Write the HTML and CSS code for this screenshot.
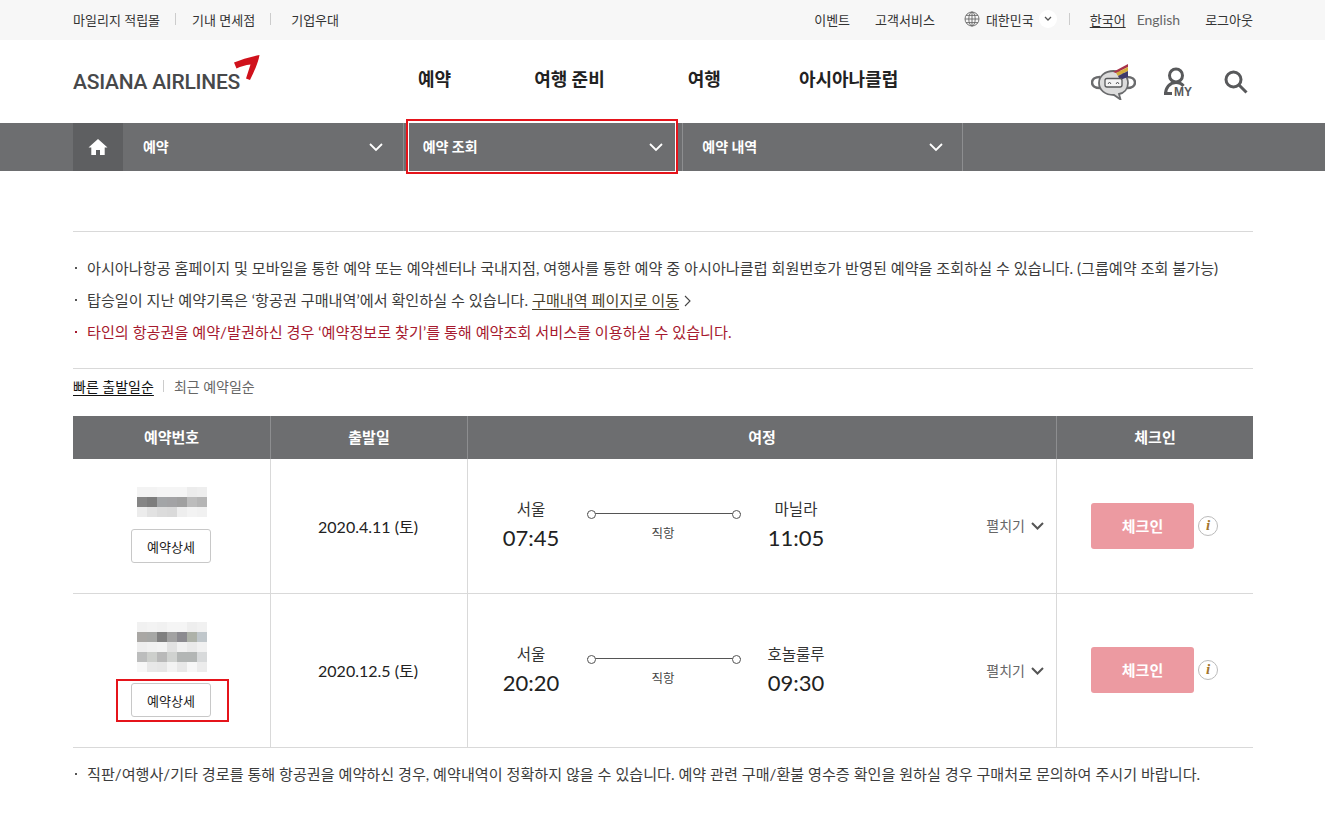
FILE: index.html
```html
<!DOCTYPE html>
<html lang="ko">
<head>
    <meta charset="UTF-8">
    <title>예약 조회 | 아시아나항공</title>
    <link rel="stylesheet" href="styles.css">
</head>
<body>
    <div class="top-bar">
        <div class="wrap top-inner">
            <ul class="top-links">
                <li>마일리지 적립몰</li>
                <li>기내 면세점</li>
                <li>기업우대</li>
            </ul>
            <div class="top-right">
                <span class="top-item">이벤트</span>
                <span class="top-item">고객서비스</span>
                <span class="country">
                    <svg class="globe" width="16" height="16" viewBox="0 0 16 16" fill="none" stroke="#666" stroke-width="0.9">
                        <circle cx="8" cy="8" r="7"/>
                        <ellipse cx="8" cy="8" rx="3.2" ry="7"/>
                        <path d="M8 1v14M1 8h14M2 4.4h12M2 11.6h12"/>
                    </svg>
                    대한민국
                    <span class="country-toggle">
                        <svg width="8" height="6" viewBox="0 0 8 6" fill="none" stroke="#555" stroke-width="1.3"><path d="M1 1l3 3 3-3"/></svg>
                    </span>
                </span>
                <span class="lang lang-on">한국어</span>
                <span class="lang lang-en">English</span>
                <span class="logout">로그아웃</span>
            </div>
        </div>
    </div>

    <header class="wrap header">
        <div class="logo">
            <span class="logo-text">ASIANA AIRLINES</span>
            <svg class="logo-mark" width="28" height="28" viewBox="0 0 28 28">
                <path d="M1 8.500C8 5.500 18 2.500 26.500 1 25.500 8 21 18 17 26L13 24.500C14.500 20 16 15 17.500 10.500 12.500 11 8 12.500 3.500 14.500Z" fill="#d0111b"/>
            </svg>
        </div>
        <nav class="main-nav">
            <a class="nav-resv">예약</a>
            <a class="nav-prep">여행 준비</a>
            <a class="nav-trip">여행</a>
            <a class="nav-club">아시아나클럽</a>
        </nav>
        <div class="header-icons">
            <svg class="bot-icon" width="45" height="36" viewBox="0 0 45 36">
                <path d="M9 13C4 13 1 15.500 1 18.500S4 24 9 24" fill="none" stroke="#6a6b6d" stroke-width="2.500"/>
                <path d="M36 13c5 0 8 2.500 8 5.500S41 24 36 24" fill="none" stroke="#6a6b6d" stroke-width="2.500"/>
                <path d="M22.500 7C31 7 37 12 37 19c0 6-4 10-9 11l1.500 5.500L23 31C14 31 8 26 8 19S14 7 22.500 7z" fill="#dcdcdc" stroke="#6a6b6d" stroke-width="1.800"/>
                <path d="M22 8L37 0v3L25 9z" fill="#a8324a"/>
                <path d="M25 9L37 3v4L27 12z" fill="#d3ad3c"/>
                <path d="M27 12L37 7v6l-8 3z" fill="#3d3a6b"/>
                <rect x="14" y="14.500" width="17" height="8.500" rx="2" fill="#f4f4f4" stroke="#58595b" stroke-width="1.300"/>
                <path d="M17 20l1.500-2 1.500 2M25 20l1.500-2 1.500 2" fill="none" stroke="#58595b"/>
            </svg>
            <span class="my-icon">
                <svg width="30" height="30" viewBox="0 0 30 30" fill="none" stroke="#58595b" stroke-width="3">
                    <circle cx="14" cy="8.500" r="6.500"/>
                    <path d="M3.500 27c0-6 4-11.500 10.500-11.500 3.500 0 6 1.500 7.500 3.500"/>
                    <path d="M2 26.500h8"/>
                </svg>
                <span class="my-label">MY</span>
            </span>
            <svg width="26" height="26" viewBox="0 0 26 26" fill="none" stroke="#58595b" stroke-width="3">
                <circle cx="10.500" cy="10.500" r="7.500"/>
                <path d="M16 16l7.500 7.500"/>
            </svg>
        </div>
    </header>

    <div class="sub-nav">
        <div class="wrap sub-inner">
            <div class="home">
                <svg width="20" height="18" viewBox="0 0 20 18" fill="#fff"><path d="M10 1L0.500 9.500h2.800V17h4.700v-5h4v5h4.700V9.500h2.800z"/></svg>
            </div>
            <div class="sub-item sub-first">예약<svg class="chev" width="14" height="9" viewBox="0 0 14 9" fill="none" stroke="#fff" stroke-width="1.800"><path d="M1 1l6 6 6-6"/></svg></div>
            <div class="sub-item sub-second">예약 조회<svg class="chev" width="14" height="9" viewBox="0 0 14 9" fill="none" stroke="#fff" stroke-width="1.800"><path d="M1 1l6 6 6-6"/></svg><span class="mark mark-nav"></span></div>
            <div class="sub-item sub-third">예약 내역<svg class="chev" width="14" height="9" viewBox="0 0 14 9" fill="none" stroke="#fff" stroke-width="1.800"><path d="M1 1l6 6 6-6"/></svg></div>
        </div>
    </div>

    <main class="wrap content">
        <ul class="notes">
            <li>아시아나항공 홈페이지 및 모바일을 통한 예약 또는 예약센터나 국내지점, 여행사를 통한 예약 중 아시아나클럽 회원번호가 반영된 예약을 조회하실 수 있습니다. (그룹예약 조회 불가능)</li>
            <li>탑승일이 지난 예약기록은 ‘항공권 구매내역’에서 확인하실 수 있습니다. <a class="note-link">구매내역 페이지로 이동</a><svg class="note-arrow" width="7" height="12" viewBox="0 0 7 12" fill="none" stroke="#444" stroke-width="1.100"><path d="M1 1l5 5-5 5"/></svg></li>
            <li class="note-red">타인의 항공권을 예약/발권하신 경우 ‘예약정보로 찾기’를 통해 예약조회 서비스를 이용하실 수 있습니다.</li>
        </ul>

        <div class="sort-tabs">
            <a class="sort-on">빠른 출발일순</a>
            <a class="sort-off">최근 예약일순</a>
        </div>

        <div class="resv-table">
            <div class="th">예약번호</div>
            <div class="th">출발일</div>
            <div class="th">여정</div>
            <div class="th">체크인</div>

            <div class="td row-one col-no">
                <div class="pixels">
                    <i style="background:#f3f3f3"></i><i style="background:#f3f3f3"></i><i style="background:#f5f5f5"></i><i style="background:#f5f5f5"></i><i style="background:#f5f5f5"></i><i style="background:#ececec"></i><i style="background:#eeeeee"></i>
                    <i style="background:#858585"></i><i style="background:#7d7d7d"></i><i style="background:#a3a5a7"></i><i style="background:#a3a3a5"></i><i style="background:#a0a0a0"></i><i style="background:#bcbcbc"></i><i style="background:#b5b5b5"></i>
                    <i style="background:#ececec"></i><i style="background:#e2e2e2"></i><i style="background:#dcdcdc"></i><i style="background:#dadada"></i><i style="background:#eeeeee"></i><i style="background:#f3f3f3"></i><i style="background:#f1f1f1"></i>
                </div>
                <button class="detail-btn">예약상세</button>
            </div>
            <div class="td row-one date">2020.4.11 (토)</div>
            <div class="td row-one route">
                <div class="city"><span class="city-name">서울</span><span class="time">07:45</span></div>
                <div class="line"><span class="line-bar"></span><span class="line-label">직항</span></div>
                <div class="city"><span class="city-name">마닐라</span><span class="time">11:05</span></div>
                <span class="expand">펼치기<svg width="13" height="8" viewBox="0 0 13 8" fill="none" stroke="#555" stroke-width="2"><path d="M1 1l5.500 5.500L12 1"/></svg></span>
            </div>
            <div class="td row-one checkin">
                <button class="checkin-btn">체크인</button>
                <span class="info">i</span>
            </div>

            <div class="td row-two col-no">
                <div class="pixels">
                    <i style="background:#f1f1f1"></i><i style="background:#f3f3f3"></i><i style="background:#f1f1f1"></i><i style="background:#f5f5f5"></i><i style="background:#f5f5f5"></i><i style="background:#eeeeee"></i><i style="background:#f1f1f1"></i>
                    <i style="background:#a9a7a4"></i><i style="background:#a6a7a5"></i><i style="background:#808080"></i><i style="background:#a2a2a2"></i><i style="background:#8c8b90"></i><i style="background:#aeb2a9"></i><i style="background:#c0c7cb"></i>
                    <i style="background:#eeeeee"></i><i style="background:#f1f1f1"></i><i style="background:#f3f3f3"></i><i style="background:#e2e2e2"></i><i style="background:#f1f1f1"></i><i style="background:#eaeaea"></i><i style="background:#f1f1f1"></i>
                    <i style="background:#bcbdbd"></i><i style="background:#cdcfcc"></i><i style="background:#b9b9b9"></i><i style="background:#d0d2d0"></i><i style="background:#b3b6b5"></i><i style="background:#b3b6b5"></i><i style="background:#d8dadb"></i>
                    <i style="background:#f7f7f7"></i><i style="background:#e8e8e8"></i><i style="background:#e6e6e6"></i><i style="background:#f3f3f3"></i><i style="background:#e8e8e8"></i><i style="background:#f7f7f7"></i><i style="background:#ececec"></i>
                </div>
                <button class="detail-btn detail-marked">예약상세<span class="mark mark-btn"></span></button>
            </div>
            <div class="td row-two date">2020.12.5 (토)</div>
            <div class="td row-two route">
                <div class="city"><span class="city-name">서울</span><span class="time">20:20</span></div>
                <div class="line"><span class="line-bar"></span><span class="line-label">직항</span></div>
                <div class="city"><span class="city-name">호놀룰루</span><span class="time">09:30</span></div>
                <span class="expand">펼치기<svg width="13" height="8" viewBox="0 0 13 8" fill="none" stroke="#555" stroke-width="2"><path d="M1 1l5.500 5.500L12 1"/></svg></span>
            </div>
            <div class="td row-two checkin">
                <button class="checkin-btn">체크인</button>
                <span class="info">i</span>
            </div>
        </div>

        <ul class="notes notes-bottom">
            <li>직판/여행사/기타 경로를 통해 항공권을 예약하신 경우, 예약내역이 정확하지 않을 수 있습니다. 예약 관련 구매/환불 영수증 확인을 원하실 경우 구매처로 문의하여 주시기 바랍니다.</li>
        </ul>
    </main>
</body>
</html>
```

FILE: styles.css
```css
/* Asiana reservation list */
:root {
    --grey-bar: #6d6e70;
    --grey-dark: #5e5f61;
    --line: #d9d9d9;
    --text: #333333;
    --mark: #e5141b;
}

* {
    box-sizing: border-box;
}

body {
    margin: 0;
    background-color: #ffffff;
    color: var(--text);
    font-family: Lato, "Noto Sans CJK KR", sans-serif;
    font-size: 14px;
    overflow-x: hidden;
}

ul {
    list-style: none;
    margin: 0;
    padding: 0;
}

.wrap {
    width: 1180px;
    margin-left: 73px;
}

/* top bar */
.top-bar {
    height: 40px;
    background-color: #f7f7f7;
    font-size: 13px;
    color: #333;
}

.top-inner {
    display: flex;
    justify-content: space-between;
    align-items: center;
    height: 40px;
    padding-bottom: 2px;
}

.top-links {
    display: flex;
}

.top-links li + li {
    margin-left: 15px;
    padding-left: 17px;
    background: linear-gradient(#cccccc, #cccccc) left center / 1px 12px no-repeat;
}

.top-links li:last-child {
    padding-left: 21px;
}

.top-right {
    display: flex;
    align-items: center;
}

.top-item {
    margin-right: 25px;
}

.top-item + .top-item {
    margin-right: 29px;
}

.country {
    display: flex;
    align-items: center;
    gap: 6px;
    padding-right: 13px;
    margin-right: 20px;
    background: linear-gradient(#cccccc, #cccccc) right center / 1px 12px no-repeat;
}

.country-toggle {
    display: flex;
    align-items: center;
    justify-content: center;
    width: 18px;
    height: 18px;
    margin-left: -1px;
    border-radius: 50%;
    background-color: #ffffff;
}

.lang {
    margin-right: 11px;
}

.lang-on {
    text-decoration: underline;
    text-underline-offset: 2px;
}

.lang-en {
    margin-right: 25px;
    font-size: 14px;
    color: #666;
}

/* header */
.header {
    display: flex;
    height: 83px;
    align-items: center;
    position: relative;
}

.logo {
    display: flex;
    width: 345px;
    height: 83px;
    position: relative;
}

.logo-text {
    margin-top: 30px;
    font-family: Roboto, "Liberation Sans", sans-serif;
    font-size: 21px;
    font-weight: 500;
    letter-spacing: -0.250px;
    color: #47484a;
}

.logo-mark {
    position: absolute;
    left: 160px;
    top: 14px;
}

.main-nav {
    display: flex;
    font-size: 18px;
    font-weight: 700;
    color: #222;
    margin-top: -7px;
}

.nav-prep {
    margin-left: 83px;
}

.nav-trip {
    margin-left: 83px;
}

.nav-club {
    margin-left: 78px;
}

.header-icons {
    display: flex;
    align-items: center;
    margin-left: auto;
    margin-right: 4px;
}

.bot-icon {
    margin-right: 26px;
    margin-top: 1px;
}

.my-icon {
    position: relative;
    display: block;
    width: 30px;
    height: 30px;
    margin-right: 31px;
}

.my-label {
    position: absolute;
    right: 0;
    bottom: 0;
    padding-left: 1px;
    background-color: #fff;
    font-family: "Liberation Sans", sans-serif;
    font-size: 12px;
    font-weight: 700;
    line-height: 10px;
    color: #58595b;
}

/* sub nav */
.sub-nav {
    height: 48px;
    background-color: var(--grey-bar);
}

.sub-inner {
    display: flex;
    height: 48px;
    width: 890px;
    border-right: 1px solid #8d8e90;
}

.home {
    display: flex;
    align-items: center;
    justify-content: center;
    width: 50px;
    background-color: var(--grey-dark);
}

.sub-item {
    display: flex;
    align-items: center;
    justify-content: space-between;
    position: relative;
    width: 280px;
    padding: 0 19px 2px 19px;
    color: #fff;
    font-size: 14px;
    font-weight: 700;
}

.sub-first {
    padding-left: 20px;
    padding-right: 20px;
}

.sub-second,
.sub-third {
    border-left: 1px solid #8d8e90;
}

.chev {
    margin-top: 2px;
}

.mark {
    position: absolute;
    border: 2px solid var(--mark);
    pointer-events: none;
}

.mark-nav {
    left: 2px;
    right: 4px;
    top: -4px;
    bottom: -3px;
    box-shadow: inset 0 0 0 1px #ffffff;
}

/* notes */
.content {
    padding-top: 60px;
}

.notes {
    border-top: 1px solid var(--line);
    padding: 20px 0 20px;
    border-bottom: 1px solid var(--line);
    line-height: 32px;
    font-size: 15.150px;
    color: #3c3c3c;
}

.notes li {
    padding-left: 14px;
    position: relative;
}

.notes li::before {
    content: "";
    position: absolute;
    left: 2px;
    top: 15px;
    width: 2px;
    height: 2px;
    background-color: #555;
}

.note-link {
    text-decoration: underline;
    text-underline-offset: 3px;
    color: #4a3f2a;
}

.note-arrow {
    margin-left: 5px;
    vertical-align: -1px;
}

.note-red {
    color: #a6192e;
}

.notes li.note-red::before {
    background-color: #a6192e;
}

.notes-bottom {
    border: none;
    padding: 10px 0 0;
    font-size: 15.110px;
}

/* sort tabs */
.sort-tabs {
    display: flex;
    align-items: center;
    height: 38px;
    padding-bottom: 5px;
    font-size: 14px;
}

.sort-on {
    color: #111;
    text-decoration: underline;
    text-underline-offset: 3px;
    padding-right: 10px;
    background: linear-gradient(#cccccc, #cccccc) right center / 1px 12px no-repeat;
}

.sort-off {
    margin-left: 10px;
    color: #666;
}

/* table */
.resv-table {
    display: grid;
    grid-template-columns: 197px 197px 589px 197px;
    grid-template-rows: 43px 134px 154px;
    margin-top: 9px;
    border-bottom: 1px solid var(--line);
}

.th {
    display: flex;
    align-items: center;
    justify-content: center;
    padding-bottom: 2px;
    background-color: var(--grey-bar);
    color: #fff;
    font-size: 15px;
    font-weight: 700;
    border-left: 1px solid #8d8e90;
}

.th:first-child {
    border-left: none;
}

.td {
    border-left: 1px solid var(--line);
}

.row-two {
    border-top: 1px solid var(--line);
}

.col-no {
    border-left: none;
    display: flex;
    flex-direction: column;
    align-items: center;
    padding-top: 28px;
}

.pixels {
    display: grid;
    grid-template-columns: repeat(7, 10px);
    grid-auto-rows: 10px;
    margin-left: 1px;
}

.pixels i {
    display: block;
}

.detail-btn {
    position: relative;
    width: 80px;
    height: 34px;
    margin-top: 12px;
    margin-right: 1px;
    padding: 0;
    border: 1px solid #c8c8c8;
    border-radius: 3px;
    background-color: #fff;
    color: #222;
    font-family: inherit;
    font-size: 13px;
}

.detail-marked {
    margin-top: 11px;
}

.mark-btn {
    left: -16px;
    right: -19px;
    top: -5px;
    bottom: -6px;
}

.date {
    display: flex;
    align-items: center;
    justify-content: center;
    padding-right: 2px;
    font-size: 16px;
    color: #222;
}

.row-two.date {
    padding-bottom: 2px;
}

.route {
    display: flex;
    align-items: flex-start;
    position: relative;
    padding-left: 8px;
}

.row-one.route {
    padding-top: 39px;
}

.row-two.route {
    padding-top: 49px;
}

.city {
    display: flex;
    flex-direction: column;
    align-items: center;
    width: 110px;
    color: #333;
}

.city-name {
    font-size: 15.500px;
    line-height: 22px;
}

.time {
    margin-top: 2px;
    font-size: 22px;
    line-height: 32px;
    color: #222;
}

.line {
    display: flex;
    flex-direction: column;
    align-items: center;
    width: 154px;
    margin: 15px 0 0 1px;
}

.line-bar {
    position: relative;
    display: block;
    width: 154px;
    height: 1px;
    background-color: #555;
}

.line-bar::before,
.line-bar::after {
    content: "";
    position: absolute;
    top: -3px;
    width: 7px;
    height: 7px;
    border: 1px solid #555;
    border-radius: 50%;
    background-color: #fff;
}

.line-bar::before {
    left: 0;
}

.line-bar::after {
    right: 0;
}

.line-label {
    margin-top: 11px;
    margin-right: 2px;
    font-size: 12.500px;
    line-height: 18px;
    color: #444;
}

.expand {
    position: absolute;
    right: 12px;
    top: 50%;
    display: flex;
    align-items: center;
    gap: 6px;
    margin-top: -9px;
    line-height: 18px;
    font-size: 14px;
    color: #666;
}

.checkin {
    display: flex;
    align-items: center;
    padding-left: 34px;
}

.row-two.checkin {
    padding-bottom: 1px;
}

.checkin-btn {
    width: 103px;
    height: 46px;
    padding: 0 0 2px;
    border: none;
    border-radius: 3px;
    background-color: #ec9aa1;
    color: #fff;
    font-family: inherit;
    font-size: 15px;
    font-weight: 700;
}

.info {
    display: flex;
    align-items: center;
    justify-content: center;
    width: 20px;
    height: 20px;
    margin-left: 4px;
    margin-top: -1px;
    border: 1px solid #bbb;
    border-radius: 50%;
    font-family: "Liberation Serif", serif;
    font-size: 15px;
    font-weight: 700;
    font-style: italic;
    color: #a5762d;
}
```
